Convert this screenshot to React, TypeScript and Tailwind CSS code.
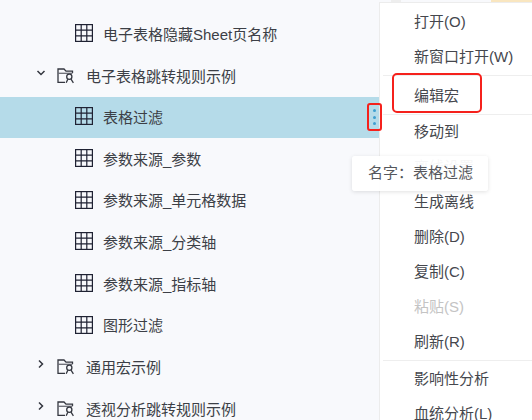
const font = { fontFamily: '"Liberation Sans", "Noto Sans CJK SC", sans-serif' };

function TableIcon() {
  return (
    <svg width="18" height="18" viewBox="0 0 18 18" className="shrink-0 -translate-y-px" fill="none" stroke="#1f2233" strokeWidth="1.2">
      <rect x="0.6" y="0.6" width="16.8" height="16.8" />
      <path d="M6.2 0.6V17.4M11.8 0.6V17.4M0.6 6.2H17.4M0.6 11.8H17.4" />
    </svg>
  );
}

function FolderIcon() {
  return (
    <svg width="19" height="16" viewBox="0 0 19 16" className="block" fill="none" stroke="#33363f" strokeWidth="1.3">
      <path d="M8 14.4H1V1H7L9 3.2H15.5V5" />
      <path d="M1 5.3H15.5" stroke="#6a6c74" />
      <circle cx="12.3" cy="8.8" r="2.6" />
      <path d="M9.2 14.8L10.8 11.2M14 11.2L16.4 14.8" />
    </svg>
  );
}

function Chevron({ open }: { open: boolean }) {
  return (
    <svg width="10" height="10" viewBox="0 0 10 10" className="shrink-0 -translate-y-[3px]" fill="none" stroke="#33363f" strokeWidth="1.5">
      <path d={open ? "M1.5 3L5 6.5L8.5 3" : "M3 1.5L6.5 5L3 8.5"} />
    </svg>
  );
}

function Sheet({ label, selected }: { label: string; selected?: boolean }) {
  return (
    <div className={`h-[41.67px] shrink-0 flex items-center pl-[75px] ${selected ? "bg-[#b5dbe9]" : ""}`}>
      <TableIcon />
      <span className="ml-[10px] pt-[2px] text-[15px] text-[#3c3f46] whitespace-nowrap">{label}</span>
    </div>
  );
}

function Folder({ label, open }: { label: string; open?: boolean }) {
  return (
    <div className="h-[41.67px] shrink-0 flex items-center pl-[36px]">
      <Chevron open={!!open} />
      <span className="ml-[11px] shrink-0"><FolderIcon /></span>
      <span className="ml-[10px] pt-[2px] text-[15px] text-[#3c3f46] whitespace-nowrap">{label}</span>
    </div>
  );
}

function Item({ label, disabled }: { label: string; disabled?: boolean }) {
  return (
    <div className={`h-[35px] shrink-0 flex items-center pl-[34px] text-[15px] whitespace-nowrap ${disabled ? "text-[#c4c4c4]" : "text-[#45474d]"}`}>
      {label}
    </div>
  );
}

export default function App() {
  return (
    <div className="relative w-[532px] h-[420px] overflow-hidden bg-[#f8f9fc]" style={font}>
      <div className="flex flex-col -mt-[28.4px]">
        <Sheet label="电子表格隐藏参数名称" />
        <Sheet label="电子表格隐藏Sheet页名称" />
        <Folder label="电子表格跳转规则示例" open />
        <Sheet label="表格过滤" selected />
        <Sheet label="参数来源_参数" />
        <Sheet label="参数来源_单元格数据" />
        <Sheet label="参数来源_分类轴" />
        <Sheet label="参数来源_指标轴" />
        <Sheet label="图形过滤" />
        <Folder label="通用宏示例" />
        <Folder label="透视分析跳转规则示例" />
      </div>

      {/* context menu */}
      <div className="absolute left-[379px] top-[2px] w-[160px] h-[430px] bg-white border-l border-t border-[#ececec] flex flex-col pt-[2px]">
        <Item label="打开(O)" />
        <Item label="新窗口打开(W)" />
        <div className="h-[4px] shrink-0 ml-[3px] border-t border-[#eeeeee]" />
        <Item label="编辑宏" />
        <div className="h-px shrink-0 ml-[3px] bg-[#eeeeee]" />
        <Item label="移动到" />
        <Item label="离线设置" />
        <Item label="生成离线" />
        <Item label="删除(D)" />
        <Item label="复制(C)" />
        <Item label="粘贴(S)" disabled />
        <Item label="刷新(R)" />
        <div className="h-[2px] shrink-0 ml-[3px] border-t border-[#eeeeee]" />
        <Item label="影响性分析" />
        <Item label="血统分析(L)" />
      </div>

      {/* three-dot button with annotation */}
      <div className="absolute left-[367px] top-[103px] w-[15px] h-[28px] border-2 border-[#f5211c] rounded-[3px] flex flex-col items-center justify-center gap-[3.5px]">
        <span className="w-[3px] h-[3px] rounded-full bg-[#3f9fd0]" />
        <span className="w-[3px] h-[3px] rounded-full bg-[#3f9fd0]" />
        <span className="w-[3px] h-[3px] rounded-full bg-[#3f9fd0]" />
      </div>

      {/* red annotation */}
      <div className="absolute left-[392px] top-[73px] w-[90px] h-[40px] border-2 border-[#f5211c] rounded-[5px]" />

      {/* tooltip */}
      <div className="absolute left-[352px] top-[156px] w-[136px] h-[35px] bg-white/95 rounded-[3px] shadow-[0_1px_4px_rgba(0,0,0,0.12)] flex items-center pl-[16px] text-[15px] text-[#55575c] whitespace-nowrap">
        名字：表格过滤
        <span className="absolute left-[15px] -top-[5px] w-[10px] h-[10px] bg-white rotate-45 -z-10" />
      </div>

      <div className="absolute left-[491px] top-0 w-[41px] h-[2px] bg-[#f9e6c0]" />
      <div className="absolute left-[391px] top-0 w-[10px] h-[2px] bg-[#eeeeee]" />
    </div>
  );
}
